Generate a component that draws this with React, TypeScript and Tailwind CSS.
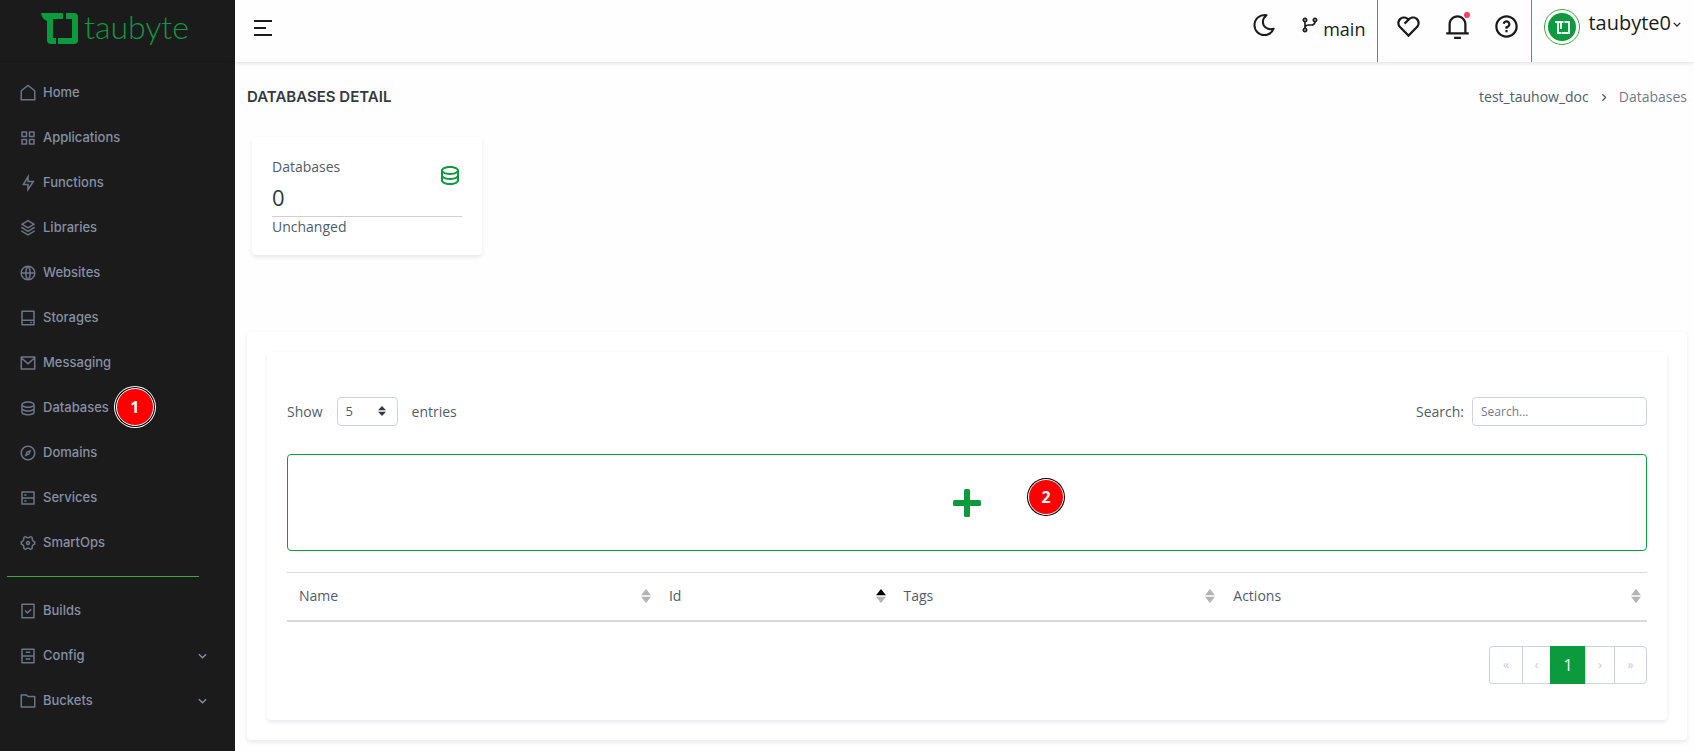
import type { ReactNode } from "react";
import type { IconType } from "react-icons";
import {
  RiArchiveDrawerLine,
  RiCompass3Line,
  RiDatabase2Line,
  RiFlashlightLine,
  RiFolderLine,
  RiFunctionLine,
  RiGitBranchLine,
  RiGlobalLine,
  RiHardDrive2Line,
  RiHeart2Line,
  RiMailLine,
  RiNotification3Line,
  RiQuestionLine,
  RiServerLine,
  RiSettings4Line,
  RiStackLine,
  RiTaskLine,
} from "react-icons/ri";

const HomeIcon = () => (
  <svg viewBox="0 0 24 24" className="size-[18px]" fill="none" stroke="currentColor" strokeWidth="2">
    <path d="M3 21V9L12 2l9 7v12z" />
  </svg>
);

const mainNav: { label: string; icon?: IconType; badge?: string }[] = [
  { label: "Home" },
  { label: "Applications", icon: RiFunctionLine },
  { label: "Functions", icon: RiFlashlightLine },
  { label: "Libraries", icon: RiStackLine },
  { label: "Websites", icon: RiGlobalLine },
  { label: "Storages", icon: RiHardDrive2Line },
  { label: "Messaging", icon: RiMailLine },
  { label: "Databases", icon: RiDatabase2Line, badge: "1" },
  { label: "Domains", icon: RiCompass3Line },
  { label: "Services", icon: RiServerLine },
  { label: "SmartOps", icon: RiSettings4Line },
];

const moreNav: { label: string; icon: IconType; expandable?: boolean }[] = [
  { label: "Builds", icon: RiTaskLine },
  { label: "Config", icon: RiArchiveDrawerLine, expandable: true },
  { label: "Buckets", icon: RiFolderLine, expandable: true },
];

function Chevron({ className }: { className: string }) {
  return (
    <svg viewBox="0 0 10 6" className={className} fill="none" stroke="currentColor" strokeWidth="1.6">
      <path d="M1 1l4 4 4-4" />
    </svg>
  );
}

function LogoMark({ className }: { className: string }) {
  return (
    <svg viewBox="0 0 37 31" className={className} fill="currentColor">
      <path d="M0 0h22v6H12v19h3v6H10q-4 0-4-4V8Q1 6 0 0z" />
      <path d="M25 0h8q4 0 4 4v23q0 4-4 4H17v-6h14V6h-6z" />
    </svg>
  );
}

function StepBadge({ children, className }: { children: ReactNode; className: string }) {
  return (
    <span
      className={`absolute flex items-center justify-center rounded-full border border-white bg-[#ff0000] font-['Open_Sans',sans-serif] text-base font-bold text-white ${className}`}
    >
      {children}
    </span>
  );
}

function NavRow({
  label,
  icon: Icon,
  badge,
  expandable,
}: {
  label: string;
  icon?: IconType;
  badge?: string;
  expandable?: boolean;
}) {
  return (
    <li>
      <a href="#" className="flex h-[45px] items-center gap-[6px] pl-[19px] pr-7">
        <span className="text-[#6c7588]">{Icon ? <Icon className="size-[18px]" /> : <HomeIcon />}</span>
        <span className="relative">
          {label}
          {badge && (
            <StepBadge className="-right-[45px] -top-[10px] size-[38px] shadow-[0_0_0_1px_#000,0_0_0_2px_#fff]">
              {badge}
            </StepBadge>
          )}
        </span>
        {expandable && <Chevron className="ml-auto h-[6px] w-[9px]" />}
      </a>
    </li>
  );
}

function Sidebar() {
  return (
    <aside className="w-[235px] shrink-0 bg-[#1b1b1b] font-[Inter,sans-serif] text-[13px] font-medium text-[#8590a5]">
      <a href="#" className="flex h-[62px] items-start gap-[6px] border-b border-[#171717] pl-[41px] pt-[13px] text-[#0b9a3e]">
        <LogoMark className="h-[31px] w-[37px]" />
        <span className="font-[Lato,sans-serif] text-[32px] font-light leading-7">taubyte</span>
      </a>
      <nav className="pt-2">
        <ul>
          {mainNav.map((item) => (
            <NavRow key={item.label} {...item} />
          ))}
        </ul>
        <hr className="ml-[7px] mr-9 mt-[11px] border-[#3ca93c]" />
        <ul className="mt-[11px]">
          {moreNav.map((item) => (
            <NavRow key={item.label} {...item} />
          ))}
        </ul>
      </nav>
    </aside>
  );
}

function Header() {
  return (
    <header className="flex h-[62px] items-start justify-between text-[#1b1b1b] shadow-[0_1px_4px_rgba(0,0,0,0.14)]">
      <button aria-label="Toggle menu" className="ml-[19px] mt-5">
        <svg viewBox="0 0 18 16" className="h-4 w-[18px]" fill="currentColor">
          <path d="M0 0h18v2H0zM0 7h12v2H0zM0 14h18v2H0z" />
        </svg>
      </button>
      <div className="flex h-full items-start text-xl">
        <button aria-label="Dark mode" className="mr-6 mt-[13px]">
          <svg viewBox="0 0 24 24" className="size-6" fill="none" stroke="currentColor" strokeWidth="2" strokeLinejoin="round">
            <path d="M14.500 2.200C7.500 1.400 2.500 6 2.500 12.200c0 5.600 4.400 9.800 9.700 9.800 4.200 0 8-2.400 9.400-6.300-2.800.9-5.600.6-7.900-1.200-3.900-3-3.900-8.500.8-12.300z" />
          </svg>
        </button>
        <button className="mr-3 mt-[15px] flex items-start gap-[3px]">
          <RiGitBranchLine className="size-5" />
          <span className="text-lg leading-7">main</span>
        </button>
        <div className="flex h-full items-start gap-[22px] border-x border-[#3ca93c] pl-[17px] pr-[11px] pt-[13px]">
          <button aria-label="Favourites">
            <RiHeart2Line className="size-[27px]" />
          </button>
          <button aria-label="Notifications" className="relative">
            <RiNotification3Line className="size-[27px]" />
            <span className="absolute -top-px right-[1px] size-[6px] rounded-full bg-[#ff3d60]" />
          </button>
          <button aria-label="Help">
            <RiQuestionLine className="size-[27px]" />
          </button>
        </div>
        <button className="flex items-start pl-3 pr-[13px] pt-[9px]">
          <span className="flex size-9 items-center justify-center rounded-full border border-[#3ca93c]">
            <span className="flex size-7 items-center justify-center rounded-full bg-[#0b9a3e] text-white">
              <svg viewBox="0 0 15 13" className="h-[13px] w-[15px]" fill="none" stroke="currentColor" strokeWidth="1.8">
                <path d="M0 1h8.500M3 1v11h3M9.500 1H14v11H6.500M6 1v7" />
              </svg>
            </span>
          </span>
          <span className="ml-2 leading-7">taubyte0</span>
          <Chevron className="ml-[2px] mt-[13px] h-[5px] w-2" />
        </button>
      </div>
    </header>
  );
}

function SortArrows({ ascending }: { ascending?: boolean }) {
  return (
    <svg viewBox="0 0 10 14" className="h-[14px] w-[10px]">
      <path d="M5 0l5 6.300H0z" fill={ascending ? "#000" : "#b3b3b3"} />
      <path d="M5 14l5-6.300H0z" fill="#b3b3b3" />
    </svg>
  );
}

const columns = [
  { label: "Name", width: "w-[27.2%]" },
  { label: "Id", width: "w-[17.25%]", ascending: true },
  { label: "Tags", width: "w-[24.25%]" },
  { label: "Actions", width: "w-[31.3%]" },
];

const pageButton = "h-[38px] border border-[#ced4da] text-xs text-[#c3cad4]";
const panel = "rounded bg-white shadow-[0_2px_4px_rgba(15,34,58,0.10)]";

function DatabaseTable() {
  return (
    <section className={`mt-[77px] p-5 ${panel}`}>
      <div className={`px-5 pb-9 pt-[45px] ${panel}`}>
        <div className="flex justify-between font-medium">
          <label className="flex items-center">
            Show
            <span className="relative mx-[14px]">
              <select className="block h-[29px] w-[61px] appearance-none rounded border border-[#ced4da] bg-white pl-2 text-[13px] font-normal text-[#505d69]">
                <option>5</option>
              </select>
              <svg viewBox="0 0 8 10" className="pointer-events-none absolute right-3 top-[9px] h-[10px] w-2" fill="#343a40">
                <path d="M4 0l4 4.200H0zM4 10l4-4.200H0z" />
              </svg>
            </span>
            entries
          </label>
          <label className="flex items-center gap-2">
            Search:
            <input
              type="search"
              placeholder="Search..."
              className="h-[29px] w-[175px] rounded border border-[#ced4da] px-2 text-xs font-normal placeholder:text-[#74788d]"
            />
          </label>
        </div>
        <div className="relative mt-7">
          <button
            aria-label="Add database"
            className="flex h-[97px] w-full items-center justify-center rounded border border-[#0b9a3e] text-[#0b9a3e]"
          >
            <svg viewBox="0 0 28 28" className="size-7" fill="currentColor">
              <rect x="0" y="11" width="28" height="6" rx="1.500" />
              <rect x="11" y="0" width="6" height="28" rx="1.500" />
            </svg>
          </button>
          <StepBadge className="left-1/2 top-[25px] ml-[61px] size-9 shadow-[0_0_0_1px_#000]">2</StepBadge>
        </div>
        <table className="mt-[21px] w-full table-fixed">
          <thead>
            <tr className="h-12 border-b-2 border-t border-b-[#d9d9d9] border-t-[#d9d9d9]">
              {columns.map((column) => (
                <th key={column.label} className={`px-3 text-left font-medium ${column.width}`}>
                  <span className="-mr-[6px] flex items-center justify-between">
                    {column.label}
                    <SortArrows ascending={column.ascending} />
                  </span>
                </th>
              ))}
            </tr>
          </thead>
        </table>
        <div className="mt-6 flex justify-end">
          <button aria-label="First page" className={`w-[33px] rounded-l border-r-0 ${pageButton}`}>«</button>
          <button aria-label="Previous page" className={`w-[29px] ${pageButton}`}>‹</button>
          <button className="-mx-px h-[38px] w-9 bg-[#0b9a3e] text-base text-white">1</button>
          <button aria-label="Next page" className={`w-[30px] ${pageButton}`}>›</button>
          <button aria-label="Last page" className={`-ml-px w-[33px] rounded-r ${pageButton}`}>»</button>
        </div>
      </div>
    </section>
  );
}

export default function App() {
  return (
    <div className="flex min-h-screen bg-[#fefefe] font-['Open_Sans',sans-serif] text-sm text-[#505d69]">
      <Sidebar />
      <div className="min-w-0 flex-1">
        <Header />
        <main className="pb-3 pl-3 pr-[7px] pt-[25px]">
          <div className="flex items-center justify-between">
            <h1 className="font-[Inter,sans-serif] text-[15px] font-semibold leading-5 text-[#343a40]">DATABASES DETAIL</h1>
            <nav aria-label="Breadcrumb" className="flex items-center leading-5">
              <a href="#">test_tauhow_doc</a>
              <Chevron className="mx-[11px] h-[5px] w-2 -rotate-90" />
              <span className="text-[#74788d]">Databases</span>
            </nav>
          </div>
          <section className={`ml-[5px] mt-[30px] w-[230px] px-5 pb-[18px] pt-5 ${panel}`}>
            <div className="flex justify-between">
              <div>
                <p className="leading-5">Databases</p>
                <p className="mt-[6px] text-[22px] font-medium leading-7 text-[#343a40]">0</p>
              </div>
              <RiDatabase2Line className="mt-[6px] size-6 text-[#0b9a3e]" />
            </div>
            <hr className="mt-[5px] border-[#ced0d2]" />
            <p className="leading-5">Unchanged</p>
          </section>
          <DatabaseTable />
        </main>
      </div>
    </div>
  );
}
